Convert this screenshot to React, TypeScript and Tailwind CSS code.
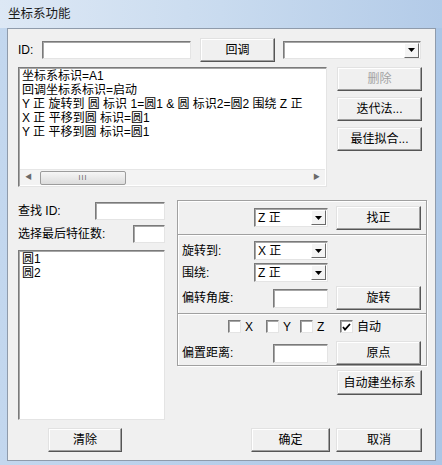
import React from "react";

const raised =
  "flex items-center justify-center bg-[#f0f0f0] border border-t-[#e2e2e2] border-l-[#e2e2e2] border-r-[#555555] border-b-[#555555] shadow-[inset_-1px_-1px_0_#a0a0a0,inset_1px_1px_0_#ffffff] text-[12px] leading-none";
const sunken =
  "bg-white border border-t-[#7a7a7a] border-l-[#7a7a7a] border-r-[#e4e4e4] border-b-[#e4e4e4] shadow-[inset_1px_1px_0_#a6a6a6]";

function Button({ label, className = "", disabled = false }: { label: string; className?: string; disabled?: boolean }) {
  return <div className={`${raised} ${className} ${disabled ? "text-[#a3a3a3]" : "text-black"}`}>{label}</div>;
}

function Arrow() {
  return (
    <svg width="7" height="4" viewBox="0 0 7 4">
      <polygon points="0,0 7,0 3.5,4" fill="#000" />
    </svg>
  );
}

function Combo({ value, className = "" }: { value: string; className?: string }) {
  return (
    <div className={`${sunken} ${className} flex items-center justify-between pl-[3px] pr-[1px]`}>
      <span className="text-[12px] leading-none">{value}</span>
      <div className="w-[15px] h-[15px] flex items-center justify-center bg-[#f4f4f4] border border-t-[#ffffff] border-l-[#ffffff] border-r-[#6a6a6a] border-b-[#6a6a6a]">
        <Arrow />
      </div>
    </div>
  );
}

function Check({ label, checked = false, className = "" }: { label: string; checked?: boolean; className?: string }) {
  return (
    <div className={`flex items-center ${className}`}>
      <div className={`w-[13px] h-[13px] ${sunken} flex items-center justify-center`}>
        {checked && (
          <svg width="9" height="8" viewBox="0 0 9 8">
            <polyline points="1,4 3,6.5 8,1" fill="none" stroke="#000" strokeWidth="1.8" />
          </svg>
        )}
      </div>
      <span className="ml-[4px] text-[12px] leading-none">{label}</span>
    </div>
  );
}

const etchedLine = "h-[2px] border-t border-t-[#a0a0a0] border-b border-b-white";

export default function App() {
  const lines = [
    "坐标系标识=A1",
    "回调坐标系标识=启动",
    "Y 正 旋转到 圆 标识 1=圆1 & 圆 标识2=圆2 围绕 Z 正",
    "X 正 平移到圆 标识=圆1",
    "Y 正 平移到圆 标识=圆1",
  ];
  return (
    <div className="w-[442px] h-[465px] flex flex-col bg-gradient-to-r from-[#c3d7ee] to-[#abc6e6] font-['Liberation_Sans','Noto_Sans_CJK_SC',sans-serif] text-black">
      {/* title bar */}
      <div className="h-[28px] flex items-center pl-[8px] bg-gradient-to-r from-[#dde8f5] via-[#c9dbef] to-[#b3cbe8]">
        <span className="text-[12.5px] text-[#1a1a1a]">坐标系功能</span>
      </div>

      {/* client area */}
      <div className="ml-[7px] mr-[6px] h-[433px] bg-[#f0f0f0] border border-[#8f9bab] pl-[10px] pt-[9px] flex flex-col">
        {/* row 1 */}
        <div className="flex items-center h-[24px]">
          <span className="w-[24px] text-[12px]">ID:</span>
          <div className={`${sunken} w-[149px] h-[18px]`} />
          <Button label="回调" className="ml-[9px] w-[75px] h-[24px]" />
          <Combo value="" className="ml-[8px] w-[138px] h-[18px]" />
        </div>

        {/* row 2 */}
        <div className="flex mt-[5px]">
          <div className={`${sunken} w-[309px] h-[120px] flex flex-col`}>
            <div className="flex-1 pl-[3px] pt-[1px] text-[12px] leading-[14px] whitespace-nowrap overflow-hidden">
              {lines.map((l) => (
                <div key={l}>{l}</div>
              ))}
            </div>
            <div className="h-[16px] mx-[1px] mb-[1px] flex items-center bg-[#f3f3f3] border-t border-t-[#e6e6e6]">
              <div className="w-[17px] flex justify-center text-[#6a6a6a] text-[7px]">◀</div>
              <div className="ml-[3px] w-[86px] h-[14px] rounded-[2px] border border-[#9c9c9c] bg-gradient-to-b from-[#f6f6f6] to-[#dcdcdc] flex items-center justify-center">
                <span className="text-[7px] text-[#5a5a5a] tracking-[1px] leading-none">III</span>
              </div>
              <div className="flex-1" />
              <div className="w-[17px] flex justify-center text-[#6a6a6a] text-[7px]">▶</div>
            </div>
          </div>
          <div className="ml-[10px] w-[85px] flex flex-col gap-[6px]">
            <Button label="删除" disabled className="h-[24px]" />
            <Button label="迭代法..." className="h-[24px]" />
            <Button label="最佳拟合..." className="h-[24px]" />
          </div>
        </div>

        {/* lower area */}
        <div className="flex mt-[13px]">
          <div className="w-[147px] flex flex-col">
            <div className="mt-[2px] h-[18px] flex items-center justify-between">
              <span className="text-[12px]">查找 ID:</span>
              <div className={`${sunken} w-[70px] h-[18px]`} />
            </div>
            <div className="mt-[5px] h-[18px] flex items-center justify-between">
              <span className="text-[12px]">选择最后特征数:</span>
              <div className={`${sunken} w-[32px] h-[18px]`} />
            </div>
            <div className={`${sunken} mt-[7px] h-[170px] pl-[3px] pt-[1px] text-[12px] leading-[14px]`}>
              <div>圆1</div>
              <div>圆2</div>
            </div>
          </div>

          <div className="ml-[12px] w-[250px] flex flex-col">
            <div className="h-[166px] border border-[#a0a0a0] shadow-[inset_1px_1px_0_#ffffff,1px_1px_0_#ffffff] flex flex-col">
              <div className="h-[33px] flex items-center">
                <Combo value="Z 正" className="ml-[76px] w-[74px] h-[19px]" />
                <Button label="找正" className="ml-[8px] w-[85px] h-[24px]" />
              </div>
              <div className={etchedLine} />
              <div className="pt-[5px] pb-[3px] flex flex-col">
                <div className="h-[19px] flex items-center">
                  <span className="w-[76px] pl-[4px] text-[12px]">旋转到:</span>
                  <Combo value="X 正" className="w-[74px] h-[19px]" />
                </div>
                <div className="mt-[3px] h-[19px] flex items-center">
                  <span className="w-[76px] pl-[4px] text-[12px]">围绕:</span>
                  <Combo value="Z 正" className="w-[74px] h-[19px]" />
                </div>
                <div className="mt-[4px] h-[24px] flex items-center">
                  <span className="w-[95px] pl-[4px] text-[12px]">偏转角度:</span>
                  <div className={`${sunken} w-[55px] h-[19px]`} />
                  <Button label="旋转" className="ml-[8px] w-[85px] h-[24px]" />
                </div>
              </div>
              <div className={etchedLine} />
              <div className="pt-[5px] flex flex-col">
                <div className="h-[13px] flex items-center pl-[50px]">
                  <Check label="X" className="w-[38px]" />
                  <Check label="Y" className="w-[34px]" />
                  <Check label="Z" className="w-[40px]" />
                  <Check label="自动" checked />
                </div>
                <div className="mt-[8px] h-[24px] flex items-center">
                  <span className="w-[95px] pl-[4px] text-[12px]">偏置距离:</span>
                  <div className={`${sunken} w-[55px] h-[19px]`} />
                  <Button label="原点" className="ml-[8px] w-[85px] h-[24px]" />
                </div>
              </div>
            </div>
            <Button label="自动建坐标系" className="mt-[4px] self-end mr-[5px] w-[85px] h-[25px]" />
          </div>
        </div>

        {/* bottom buttons */}
        <div className="flex mt-[8px]">
          <Button label="清除" className="ml-[30px] w-[74px] h-[24px]" />
          <Button label="确定" className="ml-[129px] w-[79px] h-[24px]" />
          <Button label="取消" className="ml-[6px] w-[86px] h-[24px]" />
        </div>
      </div>
    </div>
  );
}
